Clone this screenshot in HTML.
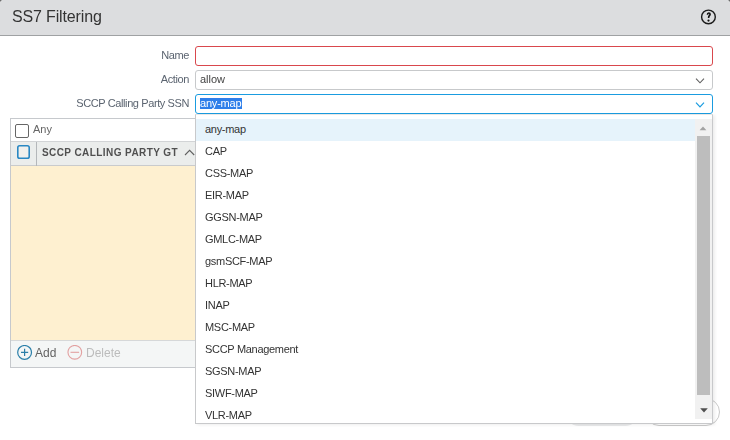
<!DOCTYPE html>
<html><head><meta charset="utf-8">
<style>
*{box-sizing:border-box;margin:0;padding:0}
html,body{width:730px;height:440px;overflow:hidden;background:#fff;font-family:"Liberation Sans",sans-serif;position:relative}
.abs{position:absolute}
#hdr{left:0;top:0;width:730px;height:36px;background:#dcdddf;border-bottom:1px solid #9fa1a3}
#title{left:12px;top:8px;font-size:16px;color:#333;letter-spacing:-0.15px;line-height:18px;white-space:nowrap}
.lbl{font-size:11px;color:#5b6470;letter-spacing:-0.4px;text-align:right;right:541px;white-space:nowrap;line-height:12px}
.inp{left:195px;width:518px;height:20px;border:1px solid #c7c9cb;border-radius:3px;background:#fff}
.chev{position:absolute;right:6px;top:7px;width:10px;height:6px}
#list{left:195px;top:114px;width:518px;height:310px;border:1px solid #c8c9cb;border-top:1px solid #ebe7e5;background:#fff;overflow:hidden;box-shadow:2px 1px 3px rgba(0,0,0,0.07)}
.item{position:absolute;left:0;width:499px;height:22px;font-size:11px;color:#333;line-height:20px;padding-left:9px;letter-spacing:-0.3px;white-space:nowrap}
#tbl{left:10px;top:118px;width:703px;height:250px;border:1px solid #c6c9cd;background:#fff}
</style></head>
<body>
<div id="root" style="position:absolute;left:0;top:0;width:730px;height:440px;will-change:transform">
<div id="hdr" class="abs"></div>
<div id="title" class="abs">SS7 Filtering</div>
<svg class="abs" style="left:700px;top:9.2px" width="17" height="17" viewBox="0 0 17 17"><circle cx="8.45" cy="7.95" r="6.85" fill="none" stroke="#1b1b1b" stroke-width="1.4"/><path d="M7.45 5.7 C7.45 4.5 8.1 3.95 8.8 3.95 C9.55 3.95 10.1 4.5 10.1 5.3 C10.1 6.5 8.65 6.8 8.65 8.2 V9.1" fill="none" stroke="#111" stroke-width="1.6"/><circle cx="8.5" cy="11.6" r="1.1" fill="#111"/></svg>

<div class="abs lbl" style="top:49px">Name</div>
<div class="abs lbl" style="top:73px">Action</div>
<div class="abs lbl" style="top:97px">SCCP Calling Party SSN</div>

<div class="abs inp" style="top:46px;border-color:#d9484d"></div>
<div class="abs inp" style="top:70px">
  <div class="abs" style="left:4px;top:2px;font-size:11px;color:#444;line-height:12px;letter-spacing:0px">allow</div>
  <svg class="chev" viewBox="0 0 10 6" style="top:6.5px;right:7px"><path d="M1 0.6 L5 4.8 L9 0.6" fill="none" stroke="#606060" stroke-width="1.1"/></svg>
</div>
<div class="abs inp" style="top:94px;border-color:#1a9ce0">
  <div class="abs" style="left:4px;top:3px;height:11px;background:#2f7fea;font-size:11px;color:#fff;line-height:11px;letter-spacing:-0.2px;padding-right:1px">any-map</div>
  <svg class="chev" viewBox="0 0 10 6" style="top:6.5px;right:7px"><path d="M1 0.6 L5 4.8 L9 0.6" fill="none" stroke="#1a9ce0" stroke-width="1.2"/></svg>
</div>

<!-- table -->
<div id="tbl" class="abs">
  <div class="abs" style="left:0;top:0;width:701px;height:23px;border-bottom:1px solid #d2d4d6"></div>
  <div class="abs" style="left:4px;top:5px;width:14px;height:14px;border:1px solid #666;border-radius:2px"></div>
  <div class="abs" style="left:22px;top:4px;font-size:11px;color:#666;line-height:12px">Any</div>
  <div class="abs" style="left:0;top:23px;width:701px;height:24px;background:#ebedec;border-bottom:1px solid #c9cbcd"></div>
  <svg class="abs" style="left:6px;top:26px" width="13" height="14" viewBox="0 0 13 14"><rect x="0.8" y="0.8" width="11.4" height="12.4" rx="1.8" fill="#f1f0ed" stroke="#2a88c3" stroke-width="1.6"/></svg>
  <div class="abs" style="left:25px;top:23px;width:1px;height:24px;background:#b4b7ba"></div>
  <div class="abs" style="left:31px;top:28px;font-size:10px;font-weight:bold;color:#505050;letter-spacing:0.42px;line-height:12px;white-space:nowrap">SCCP CALLING PARTY GT</div>
  <svg class="abs" style="left:173px;top:30px" width="11" height="7" viewBox="0 0 11 7"><path d="M1 6 L5.6 1.3 L10.2 6" fill="none" stroke="#606060" stroke-width="1.1"/></svg>
  <div class="abs" style="left:0;top:47px;width:701px;height:175px;background:#fef0d0;border-bottom:1px solid #d6d8d9"></div>
  <div class="abs" style="left:0;top:222px;width:701px;height:26px;background:#f4f6f6"></div>
  <svg class="abs" style="left:6px;top:226px" width="16" height="16" viewBox="0 0 16 16"><circle cx="7.6" cy="7.4" r="6.9" fill="none" stroke="#2b7fa9" stroke-width="1.2"/><path d="M7.6 3.8 V11 M4 7.4 H11.2" stroke="#2b7fa9" stroke-width="1.2"/></svg>
  <div class="abs" style="left:24px;top:227px;font-size:12px;color:#636363;line-height:14px">Add</div>
  <svg class="abs" style="left:56px;top:226px" width="16" height="16" viewBox="0 0 16 16"><circle cx="7.8" cy="7.3" r="6.85" fill="none" stroke="#e2a0a0" stroke-width="1.1"/><path d="M3.5 7.3 H12.1" stroke="#e2a0a0" stroke-width="1.1"/></svg>
  <div class="abs" style="left:75px;top:227px;font-size:12px;color:#bcbcbc;line-height:14px">Delete</div>
</div>

<!-- footer buttons behind list -->
<div class="abs" style="left:565px;top:398px;width:74px;height:28px;border-radius:14px;background:#e9eaeb"></div>
<div class="abs" style="left:645px;top:398px;width:75px;height:28px;border-radius:14px;border:1px solid #c9c9c9;background:#fff"></div>

</div>
<!-- dropdown list -->
<div id="list" class="abs">
  <div class="abs" style="left:0;top:4px;width:516px;height:304px;overflow:hidden">
    <div class="item" style="top:0;background:#e6f3fb">any-map</div>
    <div class="item" style="top:22px">CAP</div>
    <div class="item" style="top:44px">CSS-MAP</div>
    <div class="item" style="top:66px">EIR-MAP</div>
    <div class="item" style="top:88px">GGSN-MAP</div>
    <div class="item" style="top:110px">GMLC-MAP</div>
    <div class="item" style="top:132px">gsmSCF-MAP</div>
    <div class="item" style="top:154px">HLR-MAP</div>
    <div class="item" style="top:176px">INAP</div>
    <div class="item" style="top:198px">MSC-MAP</div>
    <div class="item" style="top:220px">SCCP Management</div>
    <div class="item" style="top:242px">SGSN-MAP</div>
    <div class="item" style="top:264px">SIWF-MAP</div>
    <div class="item" style="top:286px">VLR-MAP</div>
    <!-- scrollbar -->
    <div class="abs" style="left:499px;top:0;width:17px;height:300px;background:#f1f1f1">
      <svg class="abs" style="left:4px;top:6.5px" width="8" height="5" viewBox="0 0 8 5"><path d="M0.6 4.3 L4 0.4 L7.4 4.3Z" fill="#a3a3a3"/></svg>
      <div class="abs" style="left:2px;top:17px;width:13px;height:259px;background:#bdbdbd"></div>
      <svg class="abs" style="left:4.5px;top:288.5px" width="8" height="5" viewBox="0 0 8 5"><path d="M0.2 0.2 L7.8 0.2 L4 4.6Z" fill="#4e4e4e"/></svg>
    </div>
  </div>
</div>
<div class="abs" style="left:0;top:0;width:2px;height:2px;background:radial-gradient(circle at 0 0,#555 0,#777 1px,rgba(220,221,223,0) 2px)"></div>
<div class="abs" style="left:728px;top:0;width:2px;height:2px;background:radial-gradient(circle at 100% 0,#555 0,#777 1px,rgba(220,221,223,0) 2px)"></div>
</body></html>
